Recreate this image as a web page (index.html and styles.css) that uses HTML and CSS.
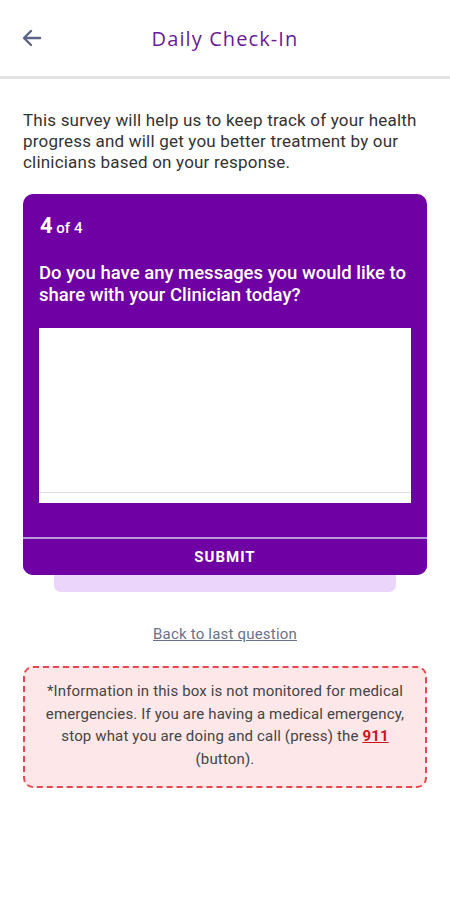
FILE: index.html
```html
<!DOCTYPE html>
<html lang="en">
<head>
	<meta charset="UTF-8">
	<meta name="viewport" content="width=device-width, initial-scale=1.0">
	<title>Daily Check-In</title>
	<link rel="stylesheet" href="styles.css">
</head>
<body>
	<header class="topbar">
		<button class="back" aria-label="Back">
			<svg width="20" height="18" viewBox="0 0 20 18" fill="none" stroke="#5b6485" stroke-width="2.4" stroke-linecap="round" stroke-linejoin="round">
				<path d="M18 9H3"/>
				<path d="M9 2L2 9l7 7"/>
			</svg>
		</button>
		<h1 class="title">Daily Check-In</h1>
	</header>

	<main class="content">
		<p class="intro">This survey will help us to keep track of your health progress and will get you better treatment by our clinicians based on your response.</p>

		<div class="card-wrap">
			<div class="card">
				<div class="step"><b>4</b> of 4</div>
				<div class="question">Do you have any messages you would like to share with your Clinician today?</div>
				<div class="answer">
					<textarea class="answer-input"></textarea>
				</div>
				<button class="submit">SUBMIT</button>
			</div>
			<div class="card-under"></div>
		</div>

		<a class="back-link" href="#">Back to last question</a>

		<div class="notice">
			*Information in this box is not monitored for medical emergencies. If you are having a medical emergency, stop what you are doing and call (press) the <a class="emergency" href="#">911</a> (button).
		</div>
	</main>
</body>
</html>
```

FILE: styles.css
```css
body {
	margin: 0;
	font-family: Roboto, "Noto Sans", sans-serif;
	background: #fff;
	color: #333;
}
.topbar {
	display: flex;
	align-items: center;
	height: 76px;
	border-bottom: 3px solid #e2e2e2;
	padding: 0 22px;
}
.back {
	background: none;
	border: 0;
	padding: 0;
	width: 20px;
	height: 18px;
	display: flex;
	cursor: pointer;
}
.title {
	flex: 1;
	margin: 0 20px 0 0;
	text-align: center;
	font-family: "Open Sans", sans-serif;
	font-weight: 500;
	font-size: 20px;
	letter-spacing: 1.1px;
	color: #6a1b9a;
}
.content {
	padding: 31px 23px 0;
}
.intro {
	margin: 0 0 21px;
	font-size: 17px;
	letter-spacing: 0.2px;
	line-height: 21px;
	color: #333;
}
.card-wrap {
	margin-bottom: 33px;
}
.card {
	background: #6f00a3;
	border-radius: 10px;
	color: #fff;
	overflow: hidden;
	display: flex;
	flex-direction: column;
}
.step {
	padding: 19px 17px 0;
	font-size: 15px;
	font-weight: 500;
}
.step b {
	font-size: 22px;
	font-weight: 700;
}
.question {
	padding: 24px 16px 0;
	font-size: 18.5px;
	font-weight: 500;
	line-height: 22px;
}
.answer {
	margin: 22px 16px 34px;
	background: #fff;
	height: 175px;
	display: flex;
}
.answer-input {
	flex: 1;
	border: 0;
	border-bottom: 1px solid #dcdcdc;
	margin-bottom: 10px;
	resize: none;
	outline: none;
	font: inherit;
}
.submit {
	background: #6f00a3;
	border: 0;
	border-top: 2px solid #b99ad6;
	color: #fff;
	height: 38px;
	font-family: Roboto, sans-serif;
	font-weight: 700;
	font-size: 15px;
	letter-spacing: 1px;
	cursor: pointer;
}
.card-under {
	margin: 0 31px;
	height: 17px;
	background: #ecd5fb;
	border-radius: 0 0 7px 7px;
}
.back-link {
	display: block;
	text-align: center;
	font-size: 15px;
	letter-spacing: 0.2px;
	color: #6a7289;
	text-decoration: underline;
	margin-bottom: 23px;
}
.notice {
	background: #fde7e8;
	border: 2px dashed #e8474f;
	border-radius: 10px;
	padding: 12px 14px 16px;
	text-align: center;
	font-size: 15px;
	letter-spacing: 0.15px;
	line-height: 22.5px;
	color: #444;
}
.emergency {
	color: #d0101b;
	font-weight: 700;
}
```
